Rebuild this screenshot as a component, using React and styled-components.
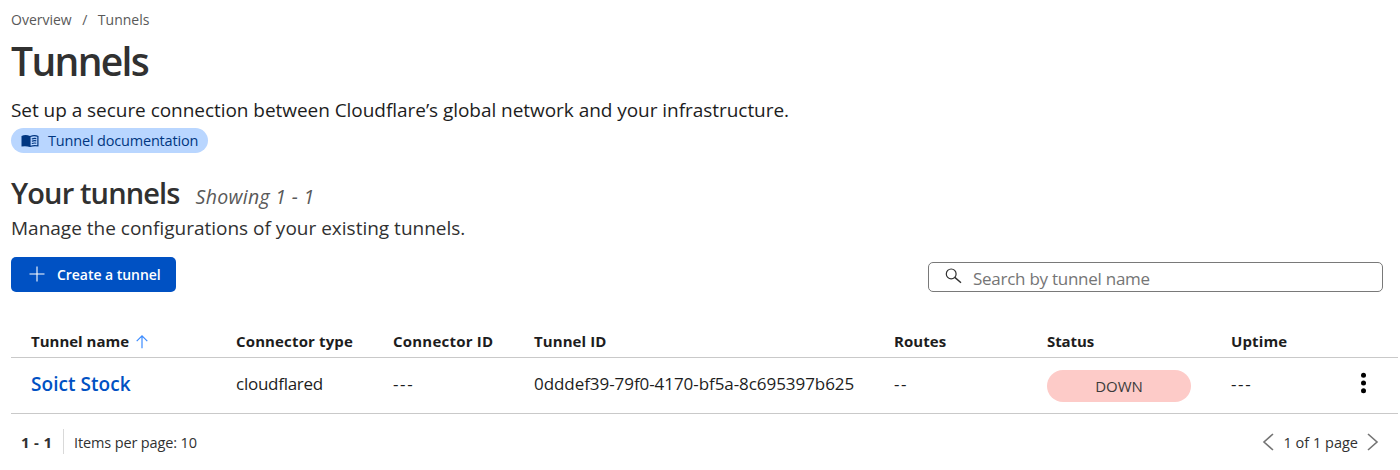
import React from "react";
import styled, { createGlobalStyle } from "styled-components";

const GlobalStyle = createGlobalStyle`
  * { box-sizing: border-box; }
  body {
    margin: 0;
    background: #fff;
    color: #1d1d1d;
    font-family: "Open Sans", "Noto Sans", sans-serif;
  }
  h1, h2, p { margin: 0; }
`;

const Page = styled.main`
  padding: 10px 2px 0 11px;
  height: 470px;
  overflow: hidden;
`;

const Breadcrumbs = styled.nav`
  display: flex;
  gap: 10.5px;
  font-size: 14px;
  line-height: 20px;
  color: #595959;
`;

const Title = styled.h1`
  margin-top: 6px;
  font-size: 39px;
  line-height: 50px;
  font-weight: 600;
  letter-spacing: -1.65px;
  color: #313131;
`;

const Lead = styled.p`
  margin-top: 12px;
  font-size: 19px;
  line-height: 24px;
  letter-spacing: -0.045px;
`;

const DocLink = styled.a`
  display: flex;
  align-items: center;
  width: 197px;
  height: 25px;
  margin-top: 6px;
  padding-left: 10px;
  gap: 9px;
  border-radius: 13px;
  background: #b9d6ff;
  color: #003681;
  font-size: 14.5px;
  line-height: 25px;
  letter-spacing: -0.18px;
  white-space: nowrap;
`;

const SectionHead = styled.div`
  display: flex;
  align-items: baseline;
  gap: 16px;
  height: 40px;
  margin-top: 20px;
`;

const SectionTitle = styled.h2`
  font-size: 29px;
  line-height: 40px;
  font-weight: 600;
  letter-spacing: -0.87px;
  color: #313131;
`;

const Showing = styled.span`
  font-size: 19.5px;
  font-style: italic;
  letter-spacing: 0.3px;
  color: #595959;
`;

const SectionText = styled.p`
  margin-top: 1px;
  font-size: 19px;
  line-height: 28px;
  color: #313131;
`;

const Toolbar = styled.div`
  display: flex;
  justify-content: space-between;
  align-items: flex-end;
  margin-top: 15px;
  padding-right: 15px;
`;

const CreateButton = styled.button`
  display: flex;
  align-items: center;
  gap: 12px;
  width: 165px;
  height: 35px;
  padding: 0 0 0 18px;
  border: 0;
  border-radius: 5px;
  background: #0051c3;
  color: #fff;
  font: 600 14px/35px "Open Sans", "Noto Sans", sans-serif;
  letter-spacing: -0.04px;
  white-space: nowrap;
  svg { margin-bottom: 1px; }
`;

const SearchBox = styled.label`
  display: flex;
  align-items: center;
  gap: 11px;
  width: 455px;
  height: 30px;
  padding-left: 16px;
  border: 1px solid #797979;
  border-radius: 5px;
  svg { margin-bottom: 3px; }
`;

const SearchInput = styled.input`
  flex: 1;
  height: 28px;
  padding: 2px 0 0;
  border: 0;
  outline: 0;
  background: transparent;
  font: 17px/26px "Open Sans", "Noto Sans", sans-serif;
  letter-spacing: -0.26px;
  &::placeholder { color: #757575; opacity: 1; }
`;

const Row = styled.div`
  display: grid;
  grid-template-columns: 205px 157px 141px 360px 153px 184px 121px 1fr;
  align-items: center;
  height: ${(p) => p.$height}px;
  padding-left: 20px;
  border-bottom: 1px solid #c9c9c9;
`;

const Table = styled.section`
  margin-top: 34px;
`;

const HeadCell = styled.div`
  display: flex;
  align-items: center;
  gap: 7px;
  font-size: 15px;
  line-height: 31px;
  font-weight: 700;
  letter-spacing: ${(p) => p.$spacing || 0}px;
  white-space: nowrap;
`;

const Cell = styled.div`
  padding-bottom: 3px;
  font-size: 17px;
  line-height: 26px;
  letter-spacing: ${(p) => p.$spacing || 0}px;
`;

const TunnelLink = styled.a`
  padding-bottom: 3px;
  color: #0051c3;
  font-size: 19px;
  font-weight: 600;
  line-height: 26px;
  letter-spacing: 0.05px;
`;

const Status = styled.div`
  width: 144px;
  height: 32px;
  margin-top: 1px;
  border-radius: 16px;
  background: #fdcbc8;
  color: #3b3b3b;
  font-size: 15px;
  font-weight: 500;
  line-height: 32px;
  text-align: center;
`;

const MenuButton = styled.button`
  display: flex;
  width: 20px;
  height: 26px;
  margin-bottom: 5px;
  padding: 0;
  border: 0;
  background: none;
`;

const Footer = styled.footer`
  display: flex;
  justify-content: space-between;
  align-items: flex-start;
  padding: 15px 19px 0 10px;
  font-size: 14.5px;
  line-height: 27px;
  color: #313131;
`;

const Group = styled.div`
  display: flex;
  align-items: flex-start;
  svg { margin-top: 4px; }
`;

const Range = styled.strong`
  width: 43px;
  height: 25px;
  border-right: 1px solid #d9d9d9;
  font-size: 15px;
  font-weight: 700;
  letter-spacing: 0.3px;
`;

const PageSize = styled.span`
  margin-left: 10px;
  letter-spacing: -0.13px;
`;

const PageCount = styled.span`
  margin: 0 9px 0 10px;
`;

const BookIcon = () => (
  <svg width="18" height="14" viewBox="0 0 18 14">
    <path d="M.5 2Q4.5.2 9 2Q13.500.2 17.500 2V12.600Q13.500 11.500 9 13Q4.500 11.500.5 12.600Z" fill="#003681" />
    <path d="M9.600 2.900Q13 1.500 16.300 2.700V11.300Q13 10.500 9.600 11.700Z" fill="#b9d6ff" />
    <path d="M10.800 5Q13.200 4 15.300 4.600M10.800 7.300Q13.200 6.300 15.300 6.900M10.800 9.600Q13.200 8.600 15.300 9.200" fill="none" stroke="#003681" strokeWidth="1.100" />
  </svg>
);

const PlusIcon = () => (
  <svg width="16" height="16" viewBox="0 0 16 16" fill="none" stroke="#fff" strokeWidth="1.100">
    <path d="M8 .5V15.500M.5 8H15.500" />
  </svg>
);

const SearchIcon = () => (
  <svg width="17" height="16" viewBox="0 0 17 16" fill="none" stroke="#313131" strokeWidth="1.200">
    <circle cx="6.200" cy="5.900" r="4.900" />
    <path d="M9.800 9.400L16 14.800" strokeWidth="1.400" />
  </svg>
);

const SortIcon = () => (
  <svg width="12" height="14" viewBox="0 0 12 14" fill="none" stroke="#3c8cff" strokeWidth="1.200">
    <path d="M6 13.300V1M.7 6.200L6 .9L11.300 6.200" />
  </svg>
);

const DotsIcon = () => (
  <svg width="20" height="26" viewBox="0 0 20 26" fill="#000">
    <circle cx="11.500" cy="5.300" r="2.500" />
    <circle cx="11.500" cy="13" r="2.500" />
    <circle cx="11.500" cy="20.800" r="2.500" />
  </svg>
);

const Chevron = ({ d }) => (
  <svg width="12" height="18" viewBox="0 0 12 18" fill="none" stroke="#747474" strokeWidth="1.600">
    <path d={d} />
  </svg>
);

const columns = [
  ["Connector type", 0.14],
  ["Connector ID", 0.22],
  ["Tunnel ID", 0.08],
  ["Routes", 0.05],
  ["Status", -0.1],
  ["Uptime", 0.12],
];

export default function App() {
  return (
    <Page>
      <GlobalStyle />
      <Breadcrumbs>
        <span>Overview</span>
        <span>/</span>
        <span>Tunnels</span>
      </Breadcrumbs>
      <Title>Tunnels</Title>
      <Lead>Set up a secure connection between Cloudflare’s global network and your infrastructure.</Lead>
      <DocLink>
        <BookIcon />
        Tunnel documentation
      </DocLink>
      <SectionHead>
        <SectionTitle>Your tunnels</SectionTitle>
        <Showing>Showing 1 - 1</Showing>
      </SectionHead>
      <SectionText>Manage the configurations of your existing tunnels.</SectionText>
      <Toolbar>
        <CreateButton>
          <PlusIcon />
          Create a tunnel
        </CreateButton>
        <SearchBox>
          <SearchIcon />
          <SearchInput placeholder="Search by tunnel name" />
        </SearchBox>
      </Toolbar>
      <Table>
        <Row $height={32}>
          <HeadCell>
            Tunnel name
            <SortIcon />
          </HeadCell>
          {columns.map(([label, spacing]) => (
            <HeadCell key={label} $spacing={spacing}>{label}</HeadCell>
          ))}
        </Row>
        <Row $height={56}>
          <TunnelLink>Soict Stock</TunnelLink>
          <Cell $spacing={-0.26}>cloudflared</Cell>
          <Cell $spacing={1.6}>---</Cell>
          <Cell $spacing={-0.06}>0dddef39-79f0-4170-bf5a-8c695397b625</Cell>
          <Cell $spacing={1.6}>--</Cell>
          <Status>DOWN</Status>
          <Cell $spacing={1.6}>---</Cell>
          <MenuButton>
            <DotsIcon />
          </MenuButton>
        </Row>
      </Table>
      <Footer>
        <Group>
          <Range>1 - 1</Range>
          <PageSize>Items per page: 10</PageSize>
        </Group>
        <Group>
          <Chevron d="M11 1L2 9L11 17" />
          <PageCount>1 of 1 page</PageCount>
          <Chevron d="M1 1L10 9L1 17" />
        </Group>
      </Footer>
    </Page>
  );
}
